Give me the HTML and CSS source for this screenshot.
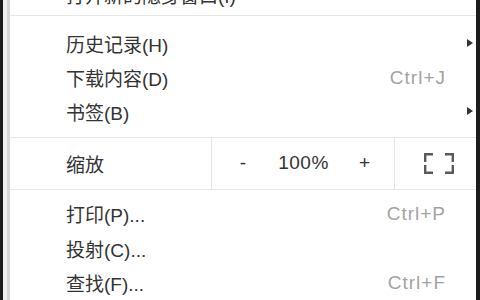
FILE: index.html
```html
<!DOCTYPE html>
<html>
<head>
<meta charset="utf-8">
<link rel="stylesheet" href="styles.css">
</head>
<body>
<div class="window">
  <div class="edge-left"><div class="edge-dark"></div><div class="edge-light"></div><div class="edge-mid"></div></div>
  <div class="menu">
    <div class="clip">
      <div class="item item-top"><span class="label">打开新的隐身窗口(I)</span><span class="sc">Ctrl+Shift+N</span><span class="slot"></span></div>
    </div>
    <div class="sep"></div>
    <div class="group g1">
      <div class="item"><span class="label">历史记录(H)</span><span class="sc"></span><span class="slot"><span class="arrow"></span></span></div>
      <div class="item"><span class="label">下载内容(D)</span><span class="sc">Ctrl+J</span><span class="slot"></span></div>
      <div class="item"><span class="label">书签(B)</span><span class="sc"></span><span class="slot"><span class="arrow"></span></span></div>
    </div>
    <div class="sep"></div>
    <div class="zoom">
      <div class="zcell zlabel"><span class="label">缩放</span></div>
      <div class="zcell zctrl"><span class="zbtn">-</span><span class="zval">100%</span><span class="zbtn">+</span></div>
      <div class="zcell zfull">
        <svg class="fs" width="30" height="21" viewBox="0 0 30 21">
          <path d="M1.2 9 V1.2 H9 M21 1.2 H28.8 V9 M28.8 12 V19.8 H21 M9 19.8 H1.2 V12" fill="none" stroke="#5a5a5a" stroke-width="2.4"/>
        </svg>
      </div>
    </div>
    <div class="sep"></div>
    <div class="group g2">
      <div class="item"><span class="label">打印(P)...</span><span class="sc">Ctrl+P</span><span class="slot"></span></div>
      <div class="item"><span class="label">投射(C)...</span><span class="sc"></span><span class="slot"></span></div>
      <div class="item"><span class="label">查找(F)...</span><span class="sc">Ctrl+F</span><span class="slot"></span></div>
    </div>
  </div>
  <div class="edge-right"></div>
</div>
</body>
</html>
```
FILE: styles.css
```css
html, body {
  margin: 0;
  padding: 0;
  background: #fff;
}
body {
  width: 480px;
  height: 300px;
  overflow: hidden;
  font-family: "Liberation Sans", "Noto Sans CJK SC", sans-serif;
  font-size: 19px;
  color: #333;
}
.window {
  display: flex;
  height: 300px;
}
.edge-left {
  display: flex;
  flex: none;
}
.edge-dark { width: 3px; background: #1c1c1c; }
.edge-light { width: 4px; background: #f0f0f0; }
.edge-mid { width: 3px; background: #d6d6d6; }
.edge-right {
  width: 4px;
  flex: none;
  background: #1c1c1c;
}
.menu {
  flex: 1;
  display: flex;
  flex-direction: column;
  min-width: 0;
}
.sep {
  height: 1px;
  background: #e6e6e6;
  flex: none;
}
.group { display: flex; flex-direction: column; }
.g1 { padding: 11px 0 8px; }
.g2 { padding: 7px 0 0; }
.g2 .item { height: 34.5px; }
.item {
  height: 34px;
  display: grid;
  grid-template-columns: 1fr auto 30px;
  align-items: center;
  padding-left: 56px;
}
.clip {
  height: 15px;
  overflow: hidden;
  display: flex;
  flex-direction: column;
  justify-content: flex-end;
}
.clip .item-top {
  flex: none;
  height: 41px;
}
.label { white-space: nowrap; }
.sc {
  color: #a3a3a3;
  letter-spacing: 1px;
  white-space: nowrap;
}
.slot {
  display: flex;
  justify-content: flex-end;
  padding-right: 3px;
}
.arrow {
  width: 0;
  height: 0;
  border-top: 4.5px solid transparent;
  border-bottom: 4.5px solid transparent;
  border-left: 6px solid #333;
  margin-top: -2px;
}
.zoom {
  height: 51px;
  display: grid;
  grid-template-columns: 202px 183px 1fr;
}
.zcell {
  display: flex;
  align-items: center;
}
.zlabel {
  padding-left: 56px;
  border-right: 1px solid #e4e4e4;
}
.zctrl {
  justify-content: space-between;
  padding: 0 25px 0 26px;
  border-right: 1px solid #e4e4e4;
}
.zbtn {
  width: 10px;
  text-align: center;
  color: #333;
}
.zval { letter-spacing: 0.5px; }
.zfull {
  padding-left: 29px;
}
.fs { display: block; }
```
